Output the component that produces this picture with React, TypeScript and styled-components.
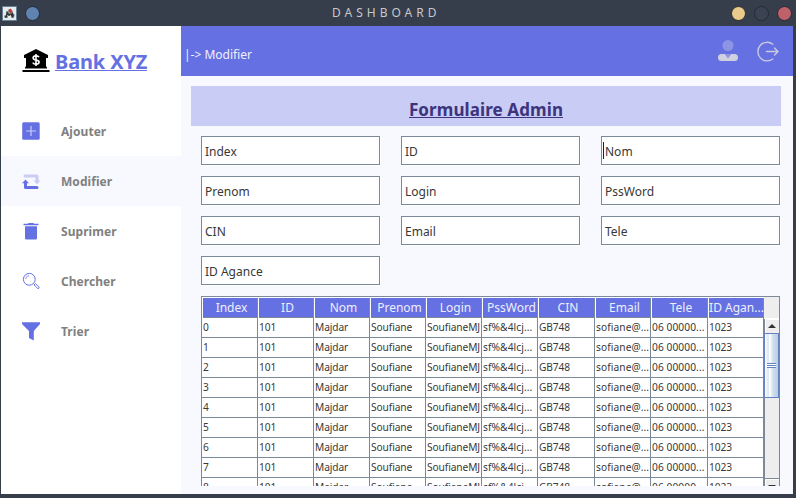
import React from "react";
import styled, { createGlobalStyle } from "styled-components";

const c = {
  frame: "#363d4b",
  primary: "#6571e3",
  pale: "#c9ccf4",
  page: "#f8f9fe",
  line: "#7a8a99",
  text: "#383838",
};

const GlobalStyle = createGlobalStyle`
  * { box-sizing: border-box; }
  body { margin: 0; background: ${c.frame}; font-family: "Noto Sans", sans-serif; overflow: hidden; }
`;

const Frame = styled.div`
  width: 796px;
  height: 498px;
  display: flex;
  flex-direction: column;
  background: ${c.frame};
`;

const TitleBar = styled.header`
  height: 26px;
  display: grid;
  grid-template-columns: 332px 108px 1fr;
  align-items: center;
  flex: none;
`;

const BarGroup = styled.div<{ $end?: boolean }>`
  display: flex;
  align-items: center;
  gap: 8px;
  justify-content: ${(p) => (p.$end ? "flex-end" : "flex-start")};
  padding: ${(p) => (p.$end ? "1px 4px 0 0" : "1px 0 0 2px")};
  svg { display: block; }
`;

const Dot = styled.span<{ $color: string }>`
  width: 15px;
  height: 15px;
  border-radius: 50%;
  border: 1.3px solid #252a34;
  background: ${(p) => p.$color};
`;

const WindowTitle = styled.h1`
  margin: 0;
  font-weight: 400;
  font-size: 12px;
  line-height: 24px;
  letter-spacing: 4px;
  white-space: nowrap;
  color: #c5c8cd;
`;

const Content = styled.div`
  margin: 0 3px 0 1px;
  height: 468px;
  display: flex;
  background: ${c.page};
`;

const Sidebar = styled.aside`
  width: 180px;
  background: #fff;
`;

const Brand = styled.div`
  height: 80px;
  display: flex;
  padding: 22px 0 0 21px;
  svg { flex: none; }
`;

const BrandName = styled.span`
  margin: -1px 0 0 5px;
  height: 24px;
  font-size: 20px;
  line-height: 30px;
  font-weight: 700;
  letter-spacing: -0.15px;
  color: ${c.primary};
  white-space: nowrap;
  border-bottom: 1px solid ${c.primary};
`;

const MenuItem = styled.a<{ $active?: boolean }>`
  height: 50px;
  display: flex;
  align-items: center;
  padding-left: 20px;
  gap: 20px;
  font-size: 12px;
  letter-spacing: 0.05px;
  font-weight: 700;
  color: #808080;
  background: ${(p) => (p.$active ? c.page : "#fff")};
  svg { display: block; }
`;

const Main = styled.main`
  width: 612px;
  display: flex;
  flex-direction: column;
`;

const TopBar = styled.div`
  height: 50px;
  flex: none;
  display: flex;
  align-items: flex-start;
  background: ${c.primary};
  padding: 13px 14px 0 3px;
  gap: 18px;
`;

const Crumb = styled.span`
  flex: 1;
  padding-top: 6px;
  font-size: 12px;
  line-height: 20px;
  color: #eff0fc;
`;

const FormTitle = styled.div`
  margin: 10px 0 0 10px;
  width: 590px;
  height: 40px;
  flex: none;
  display: flex;
  justify-content: center;
  background: ${c.pale};
`;

const FormTitleText = styled.h2`
  margin: 9px 0 0;
  height: 23px;
  font-size: 17px;
  line-height: 29px;
  letter-spacing: 0.1px;
  color: #3c347c;
  white-space: nowrap;
  border-bottom: 1px solid #3c347c;
`;

const Fields = styled.div`
  margin: 10px 0 0 20px;
  display: grid;
  grid-template-columns: repeat(3, 180px);
  grid-auto-rows: 30px;
  gap: 10px 20px;
`;

const FieldShell = styled.div`
  border: solid #fff;
  border-width: 0 1px 1px 0;
`;

const Field = styled.div<{ $focused?: boolean }>`
  height: 29px;
  border: 1px solid ${c.line};
  background: #fff;
  display: flex;
  align-items: center;
  font-size: 12px;
  line-height: 17px;
  padding-top: 1px;
  color: ${c.text};
  &::before {
    content: "";
    width: 1px;
    height: 17px;
    margin: -1px 1px 0;
    background: ${(p) => (p.$focused ? "#222" : "transparent")};
  }
`;

const TablePane = styled.div`
  margin: 10px 0 0 20px;
  width: 579px;
  height: 190px;
  display: flex;
  align-items: flex-start;
  overflow: hidden;
  border: solid ${c.line};
  border-width: 1px 0 0 1px;
`;

const columns = "56px 56px 56px 56px 56px 56px 57px 56px 57px 56px";

const Table = styled.div`
  width: 562px;
  flex: none;
  background: #fff;
`;

const HeadRow = styled.div`
  display: grid;
  grid-template-columns: ${columns};
  height: 21px;
`;

const HeadCell = styled.div<{ $tight?: boolean }>`
  border: solid #fff;
  border-width: 1px 0 0 1px;
  box-shadow: inset -1px -1px ${c.line};
  background: ${c.primary};
  color: #eeeffc;
  font-size: 12px;
  line-height: 20px;
  text-align: center;
  white-space: nowrap;
  overflow: hidden;
  padding-left: ${(p) => (p.$tight ? 0 : 2)}px;
`;

const Row = styled.div`
  display: grid;
  grid-template-columns: ${columns};
  height: 20px;
`;

const Cell = styled.div<{ $loose?: boolean }>`
  border: solid ${c.line};
  border-width: 0 1px 1px 0;
  padding-left: 1px;
  font-size: 10.2px;
  line-height: 18px;
  letter-spacing: ${(p) => (p.$loose ? 0.08 : -0.1)}px;
  color: ${c.text};
  white-space: nowrap;
  overflow: hidden;
`;

const ScrollColumn = styled.div`
  width: 16px;
  height: 197px;
  flex: none;
  display: flex;
  flex-direction: column;
  border-right: 1px solid ${c.line};
  background: #eee;
`;

const Corner = styled.div`
  height: 22px;
  flex: none;
  border-bottom: 1px solid #fff;
`;

const Track = styled.div`
  flex: 1;
  display: flex;
  flex-direction: column;
  border-left: 1px solid ${c.line};
`;

const ArrowButton = styled.div`
  height: 14px;
  flex: none;
  border: solid #fff;
  border-width: 1px 0 0 1px;
  svg { display: block; margin: 2px 0 0 1px; }
`;

const Thumb = styled.div`
  height: 65px;
  flex: none;
  margin-left: -1px;
  border: 1px solid #6382bf;
  background: linear-gradient(90deg, #fff 0, #d9e6f2 25%, #fff 36%, #cfdfed 62%, #b8cfe5 100%);
  display: flex;
  align-items: center;
  justify-content: center;
`;

const Grip = styled.div`
  width: 9px;
  height: 5px;
  background: repeating-linear-gradient(#6382bf 0 1px, #fff 1px 2px);
`;

const TrackSpace = styled.div`
  flex: 1;
  border-bottom: 1px solid ${c.line};
`;

const DownButton = styled(ArrowButton)`
  height: 15px;
  svg { margin-top: 3px; }
`;

const JavaIcon = () => (
  <svg width="15" height="15" viewBox="0 0 15 15">
    <path fill="#e5eaee" stroke="#638095" d="M.5.5h14v14H.5z" />
    <path fill="#9a9fa1" d="M2 9l2 1 1-4 2-3 3 2 1 4 2-1-1 4H3z" />
    <path fill="#33383a" d="M4.5 5l1.5 1 1 2 3-1-.5-3L12 9l-1 3-2-2-3 1-3 1-.5-1.500L4 9z" />
    <path fill="#e8ecee" d="M5 9l2 1 2-1v3H6z" />
    <path fill="#bd3a32" d="M6.500 4l2-1.500 2 2.500-1.500 2-2-1z" />
  </svg>
);

const BankIcon = () => (
  <svg width="28" height="25" viewBox="0 0 28 25">
    <path d="M14 1L26 7v3h-2v8l1 1.5v1H3v-1L4 18v-8H2V7zM.5 22h27v2H.5z" />
    <path d="M17 9.2c-.6-1-1.7-1.3-3-1.3-1.6 0-2.9.8-2.9 2.1 0 3 6 1.3 6 4 0 1.4-1.2 2.2-3 2.2-1.5 0-2.7-.5-3.3-1.6M14 6v12" fill="none" stroke="#fff" strokeWidth="1.6" />
  </svg>
);

const AddIcon = () => (
  <svg width="20" height="20" viewBox="0 0 20 20">
    <rect x="1.200" y="1.200" width="17.500" height="17.500" rx="1.5" fill={c.primary} />
    <path d="M10 5v10M5 10h10" stroke="#c9ccf5" strokeWidth="1.2" />
  </svg>
);

const ModifyIcon = () => (
  <svg width="20" height="20" viewBox="0 0 20 20">
    <g fill="none" strokeWidth="3" strokeLinejoin="round" strokeLinecap="round">
      <path d="M4 5h12v4" stroke={c.pale} />
      <path d="M16 16.500H4.500V12" stroke={c.primary} />
    </g>
    <path d="M12.500 9.500h7L16 13.200z" fill={c.pale} />
    <path d="M1 12.200L4.500 8.500 8 12.200z" fill={c.primary} />
  </svg>
);

const TrashIcon = () => (
  <svg width="20" height="20" viewBox="0 0 20 20" fill={c.primary}>
    <path d="M7.500 2h5l.5.800h4.500v1.400h-15V2.800H7zM4 5.200h12v12q0 1.300-1.300 1.300H5.300q-1.300 0-1.300-1.300z" />
  </svg>
);

const SearchIcon = () => (
  <svg width="20" height="20" viewBox="0 0 20 20" fill="none" stroke={c.primary}>
    <circle cx="8.3" cy="8.3" r="5.9" strokeWidth="1" />
    <path d="M4.7 8.2c.2-2 1.400-3.300 3.300-3.600M12.400 12.500l1 1" strokeWidth=".8" />
    <path d="M13 14l1.400-1.400 3.700 3.400q.4 1.500-1.200 1.700z" strokeWidth=".9" strokeLinejoin="round" />
  </svg>
);

const FilterIcon = () => (
  <svg width="20" height="20" viewBox="0 0 20 20">
    <path d="M1 1.200h18v1.700L12.800 10v9.500L8 17v-7L1 2.900z" fill={c.primary} />
  </svg>
);

const UserIcon = () => (
  <svg width="22" height="24" viewBox="0 0 22 24">
    <circle cx="11" cy="6.5" r="5.5" fill="#8d94e4" />
    <path d="M5 15h3l3 4 3-4h3.500a3.400 3.400 0 0 1 0 7h-13a3.400 3.400 0 0 1 0-7z" fill="#d0d0df" />
    <path d="M8 15h6l-3 4z" fill="#8d94e4" />
  </svg>
);

const LogoutIcon = () => (
  <svg width="22" height="24" viewBox="0 0 22 24" fill="none" stroke="#c9cae2" strokeWidth="1.4" strokeLinecap="round" strokeLinejoin="round">
    <path d="M15.8 5.2a9.3 9.3 0 1 0 0 14.800M9.500 12.500H21M17.500 9l3.500 3.500-3.500 3.500" />
  </svg>
);

const Arrow = ({ down = false }: { down?: boolean }) => (
  <svg width="9" height="7" viewBox="0 0 9 7">
    <path d={down ? "M1 2h8L5 6z" : "M1 6h8L5 2z"} fill="#333" />
  </svg>
);

const menu = [
  { label: "Ajouter", Icon: AddIcon },
  { label: "Modifier", Icon: ModifyIcon },
  { label: "Suprimer", Icon: TrashIcon },
  { label: "Chercher", Icon: SearchIcon },
  { label: "Trier", Icon: FilterIcon },
];

const fields = ["Index", "ID", "Nom", "Prenom", "Login", "PssWord", "CIN", "Email", "Tele", "ID Agance"];
const heads = ["Index", "ID", "Nom", "Prenom", "Login", "PssWord", "CIN", "Email", "Tele", "ID Agan..."];
const record = ["101", "Majdar", "Soufiane", "SoufianeMJ", "sf%&4lcj...", "GB748", "sofiane@...", "06 00000...", "1023"];
const rows = Array.from({ length: 9 }, (_, i) => [String(i), ...record]);

export default function App() {
  return (
    <Frame>
      <GlobalStyle />
      <TitleBar>
        <BarGroup>
          <JavaIcon />
          <Dot $color="#5f82b0" />
        </BarGroup>
        <WindowTitle>DASHBOARD</WindowTitle>
        <BarGroup $end>
          <Dot $color="#ebcb8b" />
          <Dot $color="#3b4252" />
          <Dot $color="#bf616a" />
        </BarGroup>
      </TitleBar>
      <Content>
        <Sidebar>
          <Brand>
            <BankIcon />
            <BrandName>Bank XYZ</BrandName>
          </Brand>
          {menu.map(({ label, Icon }) => (
            <MenuItem key={label} $active={label === "Modifier"}>
              <Icon />
              {label}
            </MenuItem>
          ))}
        </Sidebar>
        <Main>
          <TopBar>
            <Crumb>|-&gt; Modifier</Crumb>
            <UserIcon />
            <LogoutIcon />
          </TopBar>
          <FormTitle>
            <FormTitleText>Formulaire Admin</FormTitleText>
          </FormTitle>
          <Fields>
            {fields.map((name) => (
              <FieldShell key={name}>
                <Field $focused={name === "Nom"}>{name}</Field>
              </FieldShell>
            ))}
          </Fields>
          <TablePane>
            <Table>
              <HeadRow>
                {heads.map((h) => (
                  <HeadCell key={h} $tight={h.startsWith("ID A")}>{h}</HeadCell>
                ))}
              </HeadRow>
              {rows.map((r) => (
                <Row key={r[0]}>
                  {r.map((v, i) => (
                    <Cell key={i} $loose={v.endsWith("...")}>{v}</Cell>
                  ))}
                </Row>
              ))}
            </Table>
            <ScrollColumn>
              <Corner />
              <Track>
                <ArrowButton><Arrow /></ArrowButton>
                <Thumb><Grip /></Thumb>
                <TrackSpace />
                <DownButton><Arrow down /></DownButton>
              </Track>
            </ScrollColumn>
          </TablePane>
        </Main>
      </Content>
    </Frame>
  );
}
